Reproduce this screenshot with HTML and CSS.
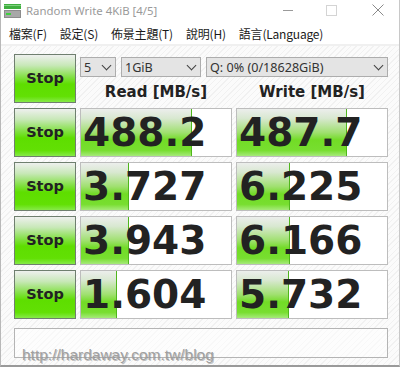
FILE: index.html
```html
<!DOCTYPE html>
<html lang="zh-Hant">
  <head>
    <meta charset="UTF-8" />
    <title>Random Write 4KiB [4/5]</title>
    <link rel="stylesheet" href="styles.css">
  </head>
  <body>
    <div class="window">
      <!-- Title bar -->
      <div class="titlebar">
        <svg class="app-icon" width="17" height="14" viewBox="0 0 17 14">
          <rect x="0" y="0" width="17" height="5" fill="#3fae3f"/>
          <rect x="0" y="1" width="17" height="1" fill="#7fd07f"/>
          <rect x="0" y="6" width="17" height="8" fill="#8c8c8c"/>
          <rect x="1" y="7" width="15" height="6" fill="#a8a8a8"/>
          <rect x="2" y="9" width="5" height="2" fill="#3fd03f"/>
        </svg>
        <span class="title">Random Write 4KiB [4/5]</span>
        <div class="controls">
          <span class="ctl ctl-min"></span>
          <span class="ctl ctl-max"></span>
          <svg class="ctl-close" width="12" height="12" viewBox="0 0 12 12">
            <path d="M0.5 0.5 L11.5 11.5 M11.5 0.5 L0.5 11.5" stroke="#8a8a8a" stroke-width="1" fill="none"/>
          </svg>
        </div>
      </div>

      <!-- Menu -->
      <div class="menubar">
        <span>檔案(F)</span>
        <span>設定(S)</span>
        <span>佈景主題(T)</span>
        <span>說明(H)</span>
        <span>語言(Language)</span>
      </div>

      <!-- Client area -->
      <div class="client">
        <div class="grid">
          <button class="stop stop-all">Stop</button>
          <div class="top-right">
            <div class="combos">
              <div class="combo combo-count"><span>5</span><i></i></div>
              <div class="combo combo-size"><span>1GiB</span><i></i></div>
              <div class="combo combo-drive"><span>Q: 0% (0/18628GiB)</span><i></i></div>
            </div>
            <div class="heads">
              <div class="head">Read [MB/s]</div>
              <div class="head">Write [MB/s]</div>
            </div>
          </div>

          <button class="stop">Stop</button>
          <div class="meter"><div class="bar" style="width:110px"></div><span>488.2</span></div>
          <div class="meter"><div class="bar" style="width:109px"></div><span>487.7</span></div>

          <button class="stop">Stop</button>
          <div class="meter"><div class="bar" style="width:47px"></div><span>3.727</span></div>
          <div class="meter"><div class="bar" style="width:52px"></div><span>6.225</span></div>

          <button class="stop">Stop</button>
          <div class="meter"><div class="bar" style="width:47px"></div><span>3.943</span></div>
          <div class="meter"><div class="bar" style="width:52px"></div><span>6.166</span></div>

          <button class="stop">Stop</button>
          <div class="meter"><div class="bar" style="width:35px"></div><span>1.604</span></div>
          <div class="meter"><div class="bar" style="width:51px"></div><span>5.732</span></div>
        </div>

        <div class="comment"></div>
      </div>

      <div class="watermark">http://hardaway.com.tw/blog</div>
    </div>
  </body>
</html>
```

FILE: styles.css
```css
/* Base */
body {
  margin: 0;
  background: #ffffff;
  font-family: "Liberation Sans", Arial, sans-serif;
}

.window {
  position: relative;
  width: 398px;
  height: 365px;
  border-left: 1px solid #b8b8b8;
  border-right: 1px solid #c8c8c8;
  border-bottom: 2px solid #9a9a9a;
  background: #ffffff;
  overflow: hidden;
}

/* Title bar */
.titlebar {
  height: 23px;
  display: flex;
  align-items: center;
  padding-left: 3px;
}

.app-icon {
  margin-top: -2px;
}

.title {
  margin-left: 5px;
  font-family: "Noto Sans", sans-serif;
  font-size: 11.4px;
  color: #9a9a9a;
  margin-top: -2px;
}

.controls {
  margin-left: auto;
  display: flex;
  align-items: center;
  margin-top: -3px;
}

.ctl-min {
  width: 10px;
  height: 1px;
  background: #9a9a9a;
  margin-right: 33px;
}

.ctl-max {
  width: 9px;
  height: 9px;
  border: 1px solid #d4d4d4;
  margin-right: 35px;
}

.ctl-close {
  margin-right: 15px;
}

/* Menu */
.menubar {
  height: 21px;
  display: flex;
  align-items: center;
  gap: 13px;
  padding-left: 8px;
  font-family: "Noto Sans CJK TC", sans-serif;
  font-size: 12px;
  letter-spacing: -0.2px;
  color: #1a1a1a;
  border-bottom: 2px solid #f0f0f0;
}

/* Client */
.client {
  padding: 8px 0 0 13px;
  height: 320px;
  background: repeating-linear-gradient(135deg, #fbfbfb 0, #fbfbfb 3px, #f1f1f1 3px, #f1f1f1 4px);
}

.grid {
  display: grid;
  grid-template-columns: 62px 152px 152px;
  grid-template-rows: 49px repeat(4, 49px);
  column-gap: 4px;
  row-gap: 5px;
}

.stop {
  margin: 0;
  padding: 0 0 1px 0;
  border: 1px solid #6f7f6f;
  background: linear-gradient(#eef0ee 0%, #c8e8b8 22%, #80e040 48%, #5ede00 62%, #62e004 88%, #86ea48 100%);
  font-family: "DejaVu Sans", Verdana, sans-serif;
  font-weight: bold;
  font-size: 14.5px;
  color: #222;
}

.top-right {
  grid-column: 2 / 4;
  display: flex;
  flex-direction: column;
}

.combos {
  display: flex;
  gap: 5px;
  margin-top: 3px;
}

.combo {
  height: 20px;
  box-sizing: border-box;
  border: 1px solid #adadad;
  background: #e4e4e4;
  display: flex;
  align-items: center;
  padding-left: 3px;
  font-family: "Noto Sans", sans-serif;
  font-size: 12.6px;
  color: #333;
}

.combo i {
  margin-left: auto;
  margin-right: 5px;
  width: 6px;
  height: 6px;
  border-right: 1.3px solid #404040;
  border-bottom: 1.3px solid #404040;
  transform: rotate(45deg);
  margin-top: -4px;
}

.combo-count { width: 36px; }
.combo-size { width: 80px; }
.combo-drive { width: 182px; }

.heads {
  display: flex;
  gap: 4px;
  margin-top: 6px;
}

.head {
  width: 152px;
  text-align: center;
  font-family: "DejaVu Sans", Verdana, sans-serif;
  font-weight: bold;
  font-size: 15px;
  color: #222;
}

/* Meter boxes */
.meter {
  position: relative;
  box-sizing: border-box;
  border: 1px solid #bdbdbd;
  background: #ffffff;
  display: flex;
  align-items: center;
}

.bar {
  position: absolute;
  left: 0;
  top: 0;
  bottom: 0;
  border-right: 1px solid #4fb61c;
  background: linear-gradient(#eceeec 0%, #d8e8d0 20%, #a0e070 50%, #72dc26 66%, #78de30 88%, #a6ea7a 100%);
}

.meter span {
  position: relative;
  padding-left: 2px;
  font-family: "DejaVu Sans", Verdana, sans-serif;
  font-weight: bold;
  font-size: 39px;
  line-height: 1;
  color: #222;
  margin-top: -1px;
}

.comment {
  margin-top: 9px;
  width: 374px;
  height: 30px;
  box-sizing: border-box;
  border: 1px solid #b4b4b4;
  background: rgba(255, 255, 255, 0.5);
}

/* Watermark */
.watermark {
  position: absolute;
  left: 21px;
  top: 346px;
  font-family: "Liberation Sans", Arial, sans-serif;
  font-size: 15.5px;
  color: #a0a0a0;
  text-shadow: 1px 1px 0 rgba(90, 90, 90, 0.35);
}
```
